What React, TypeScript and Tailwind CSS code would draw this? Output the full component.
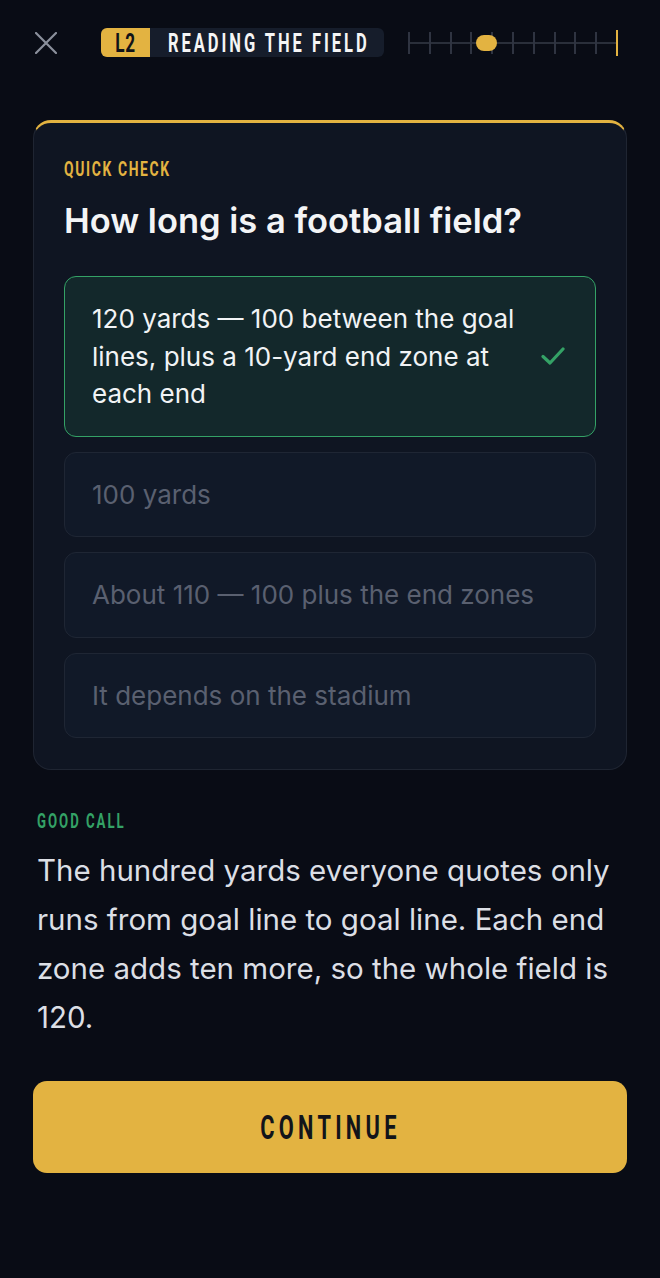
import React from "react";

const condFont = "font-['Roboto','Liberation_Sans',sans-serif] font-bold uppercase";

function Cond({ children, className = "" }: { children: React.ReactNode; className?: string }) {
  return <span className={`${condFont} inline-block whitespace-nowrap scale-x-[0.66] ${className}`}>{children}</span>;
}

const options = [
  { text: "120 yards — 100 between the goal lines, plus a 10-yard end zone at each end", correct: true },
  { text: "100 yards" },
  { text: "About 110 — 100 plus the end zones" },
  { text: "It depends on the stadium" },
];

function Progress() {
  const ticks = Array.from({ length: 10 }, (_, i) => i);
  return (
    <div className="relative h-[26px] w-[210px]">
      <div className="absolute left-0 right-[2px] top-[12px] h-[2px] bg-[#2a2f3a]" />
      <div className="absolute inset-0 flex justify-between">
        {ticks.map((i) => (
          <div key={i} className="mt-[2px] h-[22px] w-[2px] bg-[#2f3441]" />
        ))}
        <div className="h-[26px] w-[2px] bg-[#e3b341]" />
      </div>
      <div className="absolute left-[68px] top-[5px] h-[16px] w-[21px] rounded-full bg-[#e3b341]" />
    </div>
  );
}

export default function App() {
  return (
    <div className="min-h-[1278px] bg-[#090c15] font-['Inter',sans-serif] text-[#f3f4f6]">
      <div className="flex items-center px-[35px] pt-[28px]">
        <svg width="22" height="22" viewBox="0 0 22 22" className="shrink-0">
          <path d="M1 1L21 21M21 1L1 21" stroke="#8b909c" strokeWidth="2.2" strokeLinecap="round" />
        </svg>
        <div className="ml-[44px] flex h-[29px] w-[283px] shrink-0 items-stretch overflow-hidden rounded-[6px] bg-[#161d2b]">
          <div className="flex w-[49px] shrink-0 items-center justify-center bg-[#e3b341] pt-[1px] text-[26px] leading-none text-[#111318]">
            <Cond className="tracking-[1px]">L2</Cond>
          </div>
          <div className="flex min-w-0 flex-1 items-center pl-[18px] pt-[1px] text-[25px] leading-none text-[#f5f5f5]">
            <Cond className="origin-left tracking-[4.5px]">Reading the field</Cond>
          </div>
        </div>
        <div className="ml-[24px]">
          <Progress />
        </div>
      </div>

      <div className="mx-[33px] mt-[63px] rounded-[18px] border border-t-[3px] border-[#1f2532] border-t-[#e3b341] bg-[#0f1522] px-[30px] pb-[31px] pt-[36px]">
        <div className="h-[20px] text-[21px] leading-[20px] text-[#e3b341]">
          <Cond className="origin-left tracking-[2.5px]">Quick check</Cond>
        </div>
        <h1 className="mt-[22px] text-[34.5px] font-semibold leading-[40px] text-[#f3f4f6]">How long is a football field?</h1>
        <div className="mt-[35px] flex flex-col gap-[15px]">
          {options.map((o) =>
            o.correct ? (
              <div key={o.text} className="flex items-center gap-[20px] rounded-[12px] border border-[#34a266] bg-[#13282b] py-[23px] pl-[27px] pr-[30px]">
                <div className="flex-1 text-[26px] leading-[37.5px] text-[#f1f3f5]">{o.text}</div>
                <svg width="24" height="18" viewBox="0 0 24 18" className="shrink-0">
                  <path d="M2 9.5L9 16L22 2" stroke="#34a266" strokeWidth="3.2" fill="none" strokeLinecap="round" strokeLinejoin="round" />
                </svg>
              </div>
            ) : (
              <div key={o.text} className="rounded-[12px] border border-[#1f2634] bg-[#111928] py-[23px] pl-[27px] pr-[30px] text-[26px] leading-[37.5px] text-[#5a6070]">
                {o.text}
              </div>
            )
          )}
        </div>
      </div>

      <div className="px-[37px] pt-[41px]">
        <div className="h-[20px] text-[20px] leading-[20px] text-[#34a266]">
          <Cond className="origin-left tracking-[3px]">Good call</Cond>
        </div>
        <p className="mt-[15px] text-[29.5px] leading-[49px] text-[#dcdfe5]">
          The hundred yards everyone quotes only runs from goal line to goal line. Each end zone adds ten more, so the whole field is 120.
        </p>
      </div>

      <div className="px-[33px] pt-[39px]">
        <button className="flex h-[92px] w-full items-center justify-center rounded-[14px] bg-[#e3b341] text-[33px] leading-none text-[#12141a]">
          <Cond className="tracking-[6.5px]">Continue</Cond>
        </button>
      </div>
    </div>
  );
}
